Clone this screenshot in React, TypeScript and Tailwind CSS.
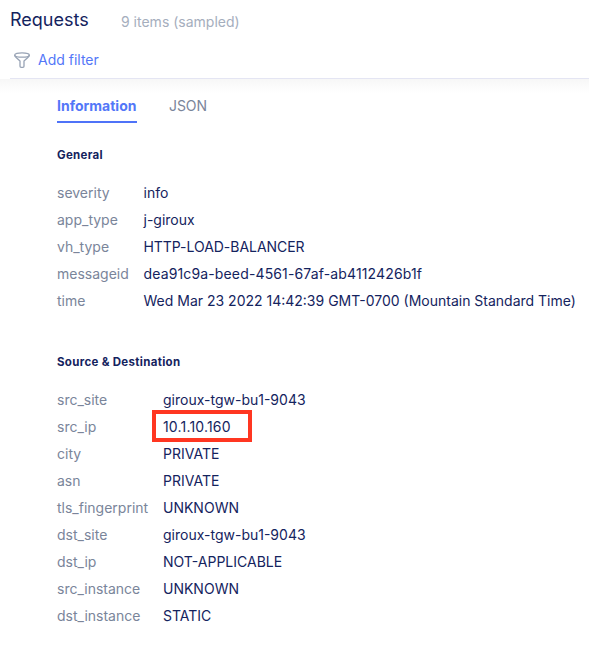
const general = [
  ["severity", "info"],
  ["app_type", "j-giroux"],
  ["vh_type", "HTTP-LOAD-BALANCER"],
  ["messageid", "dea91c9a-beed-4561-67af-ab4112426b1f"],
  ["time", "Wed Mar 23 2022 14:42:39 GMT-0700 (Mountain Standard Time)"],
];

const source = [
  ["src_site", "giroux-tgw-bu1-9043"],
  ["src_ip", "10.1.10.160"],
  ["city", "PRIVATE"],
  ["asn", "PRIVATE"],
  ["tls_fingerprint", "UNKNOWN"],
  ["dst_site", "giroux-tgw-bu1-9043"],
  ["dst_ip", "NOT-APPLICABLE"],
  ["src_instance", "UNKNOWN"],
  ["dst_instance", "STATIC"],
];

const tracking: Record<string, string> = {
  messageid: "tracking-[0.14px]",
  src_ip: "tracking-[0.18px]",
  vh_type: "tracking-[-0.04px]",
};

function Rows({ rows, labelClass }: { rows: string[][]; labelClass: string }) {
  return (
    <dl className="text-[14px] leading-[27px]">
      {rows.map(([name, value]) => (
        <div key={name} className="flex h-[27px] whitespace-nowrap">
          <dt className={`shrink-0 text-[#7a859a] ${labelClass}`}>{name}</dt>
          <dd className={`relative text-[#14235e] ${tracking[name] ?? ""}`}>
            {value}
            {name === "src_ip" && (
              <span className="absolute -left-[11px] -top-[3px] h-[32px] w-[100px] border-4 border-[#ff3621]" />
            )}
          </dd>
        </div>
      ))}
    </dl>
  );
}

export default function App() {
  return (
    <main className="h-[657px] w-[589px] overflow-hidden bg-white font-['Inter',sans-serif] text-[#14235e]">
      <header className="flex h-10 items-start pl-[10px]">
        <h1 className="w-[111px] text-[18px] leading-[40px]">Requests</h1>
        <p className="text-[14px] leading-[44px] text-[#a5aebd]">9 items (sampled)</p>
      </header>
      <div className="ml-[10px] flex h-[39px] items-center border-b border-[#e4e5f3] pl-1 pt-[2px]">
        <svg width="16" height="16" viewBox="0 0 16 16" fill="none" stroke="#98a3b5" strokeWidth="1.3" strokeLinejoin="round">
          <ellipse cx="8" cy="3" rx="7.3" ry="2.2" />
          <path d="M.7 3c0 1 .5 1.7 1.2 2.3L6 9v5.2c0 .7.5 1.1 1.1 1.1h1.8c.6 0 1.1-.4 1.1-1.1V9l4.1-3.7c.7-.6 1.2-1.3 1.2-2.3" />
        </svg>
        <button className="ml-2 text-[14px] leading-5 text-[#5377f8]">Add filter</button>
      </div>
      <div className="h-[14px] bg-linear-to-b from-[#f7f7f7] to-white" />
      <section className="-mt-1 pl-[57px]">
        <nav className="flex h-[34px] gap-8 text-[14px] leading-[34px]">
          <button className="w-20 whitespace-nowrap border-b-2 border-[#4f73f8] text-left font-bold text-[#5377f8]">Information</button>
          <button className="tracking-[-0.1px] text-[#7a859a]">JSON</button>
        </nav>
        <h2 className="mt-[22px] text-[11.5px] font-bold leading-5 tracking-[0.3px]">General</h2>
        <div className="mt-[14px]"><Rows rows={general} labelClass="w-[86.5px]" /></div>
        <h2 className="mt-[38px] text-[11.5px] font-bold leading-5 tracking-[0.31px]">Source &amp; Destination</h2>
        <div className="mt-[14px]"><Rows rows={source} labelClass="w-[106px]" /></div>
      </section>
    </main>
  );
}
